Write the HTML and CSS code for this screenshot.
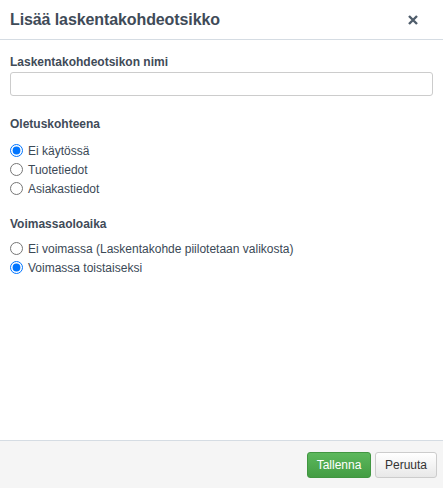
FILE: index.html
```html
<!DOCTYPE html>
<html lang="fi">
<head>
<meta charset="utf-8">
<link rel="stylesheet" href="styles.css">
</head>
<body>
<div class="modal">
  <div class="modal-header">
    <h1 class="title">Lisää laskentakohdeotsikko</h1>
    <button class="close" type="button" aria-label="Sulje">
      <svg width="12" height="12" viewBox="0 0 12 12"><path d="M2 2 L10 10 M10 2 L2 10" stroke="#4f5d6b" stroke-width="2.4" stroke-linecap="butt"/></svg>
    </button>
  </div>
  <div class="modal-body">
    <div class="field">
      <label class="label">Laskentakohdeotsikon nimi</label>
      <input class="input" type="text">
    </div>
    <div class="group">
      <div class="group-title">Oletuskohteena</div>
      <label class="radio"><input type="radio" name="a" checked> <span>Ei käytössä</span></label>
      <label class="radio"><input type="radio" name="a"> <span>Tuotetiedot</span></label>
      <label class="radio"><input type="radio" name="a"> <span>Asiakastiedot</span></label>
    </div>
    <div class="group group-tight">
      <div class="group-title">Voimassaoloaika</div>
      <label class="radio"><input type="radio" name="b"> <span>Ei voimassa (Laskentakohde piilotetaan valikosta)</span></label>
      <label class="radio"><input type="radio" name="b" checked> <span>Voimassa toistaiseksi</span></label>
    </div>
  </div>
  <div class="modal-footer">
    <button class="btn btn-primary" type="button">Tallenna</button>
    <button class="btn btn-default" type="button">Peruuta</button>
  </div>
</div>
</body>
</html>
```
FILE: styles.css
```css
* { box-sizing: border-box; }
html, body { margin: 0; padding: 0; height: 100%; }
body {
  font-family: "Liberation Sans", Arial, sans-serif;
  color: #3b4956;
  background: #fff;
  font-size: 12px;
}
.modal {
  height: 488px;
  display: flex;
  flex-direction: column;
}
.modal-header {
  height: 40px;
  border-bottom: 1px solid #d5dce3;
  display: flex;
  align-items: center;
  justify-content: space-between;
  padding: 0 24px 0 10px;
}
.title {
  margin: 0;
  font-size: 16px;
  font-weight: bold;
  color: #3f4b58;
  letter-spacing: -0.1px;
}
.close {
  border: 0;
  background: none;
  padding: 0;
  display: flex;
  cursor: pointer;
}
.modal-body {
  flex: 1;
  padding: 15px 10px 0 10px;
}
.field { margin-bottom: 21px; }
.label {
  display: block;
  font-weight: bold;
  font-size: 12px;
  color: #3f4b58;
  margin-bottom: 3px;
}
.input {
  display: block;
  width: 100%;
  height: 24px;
  border: 1px solid #cccccc;
  border-radius: 3px;
  background: #fff;
}
.group { margin-bottom: 19px; }
.group-title {
  font-weight: bold;
  font-size: 12px;
  color: #3f4b58;
  margin-bottom: 10px;
}
.group-tight .group-title { margin-bottom: 8px; }
.radio {
  display: flex;
  align-items: center;
  height: 19px;
  color: #3b4956;
  font-size: 12px;
}
.radio input {
  margin: 0 5px 0 0;
  width: 13px;
  height: 13px;
}
.modal-footer {
  height: 48px;
  border-top: 1px solid #d5dce3;
  background: #f5f5f5;
  display: flex;
  justify-content: flex-end;
  align-items: center;
  gap: 4px;
  padding: 0 6px 0 0;
}
.btn {
  font-family: "Liberation Sans", Arial, sans-serif;
  font-size: 12px;
  height: 26px;
  padding: 0 8px;
  border-radius: 3px;
  cursor: pointer;
}
.btn-primary {
  background: linear-gradient(#5cb85c, #449d44);
  border: 1px solid #419641;
  color: #fff;
  width: 64px;
}
.btn-default {
  background: linear-gradient(#fff, #e8e8e8);
  border: 1px solid #cccccc;
  color: #333;
  width: 62px;
}
```
